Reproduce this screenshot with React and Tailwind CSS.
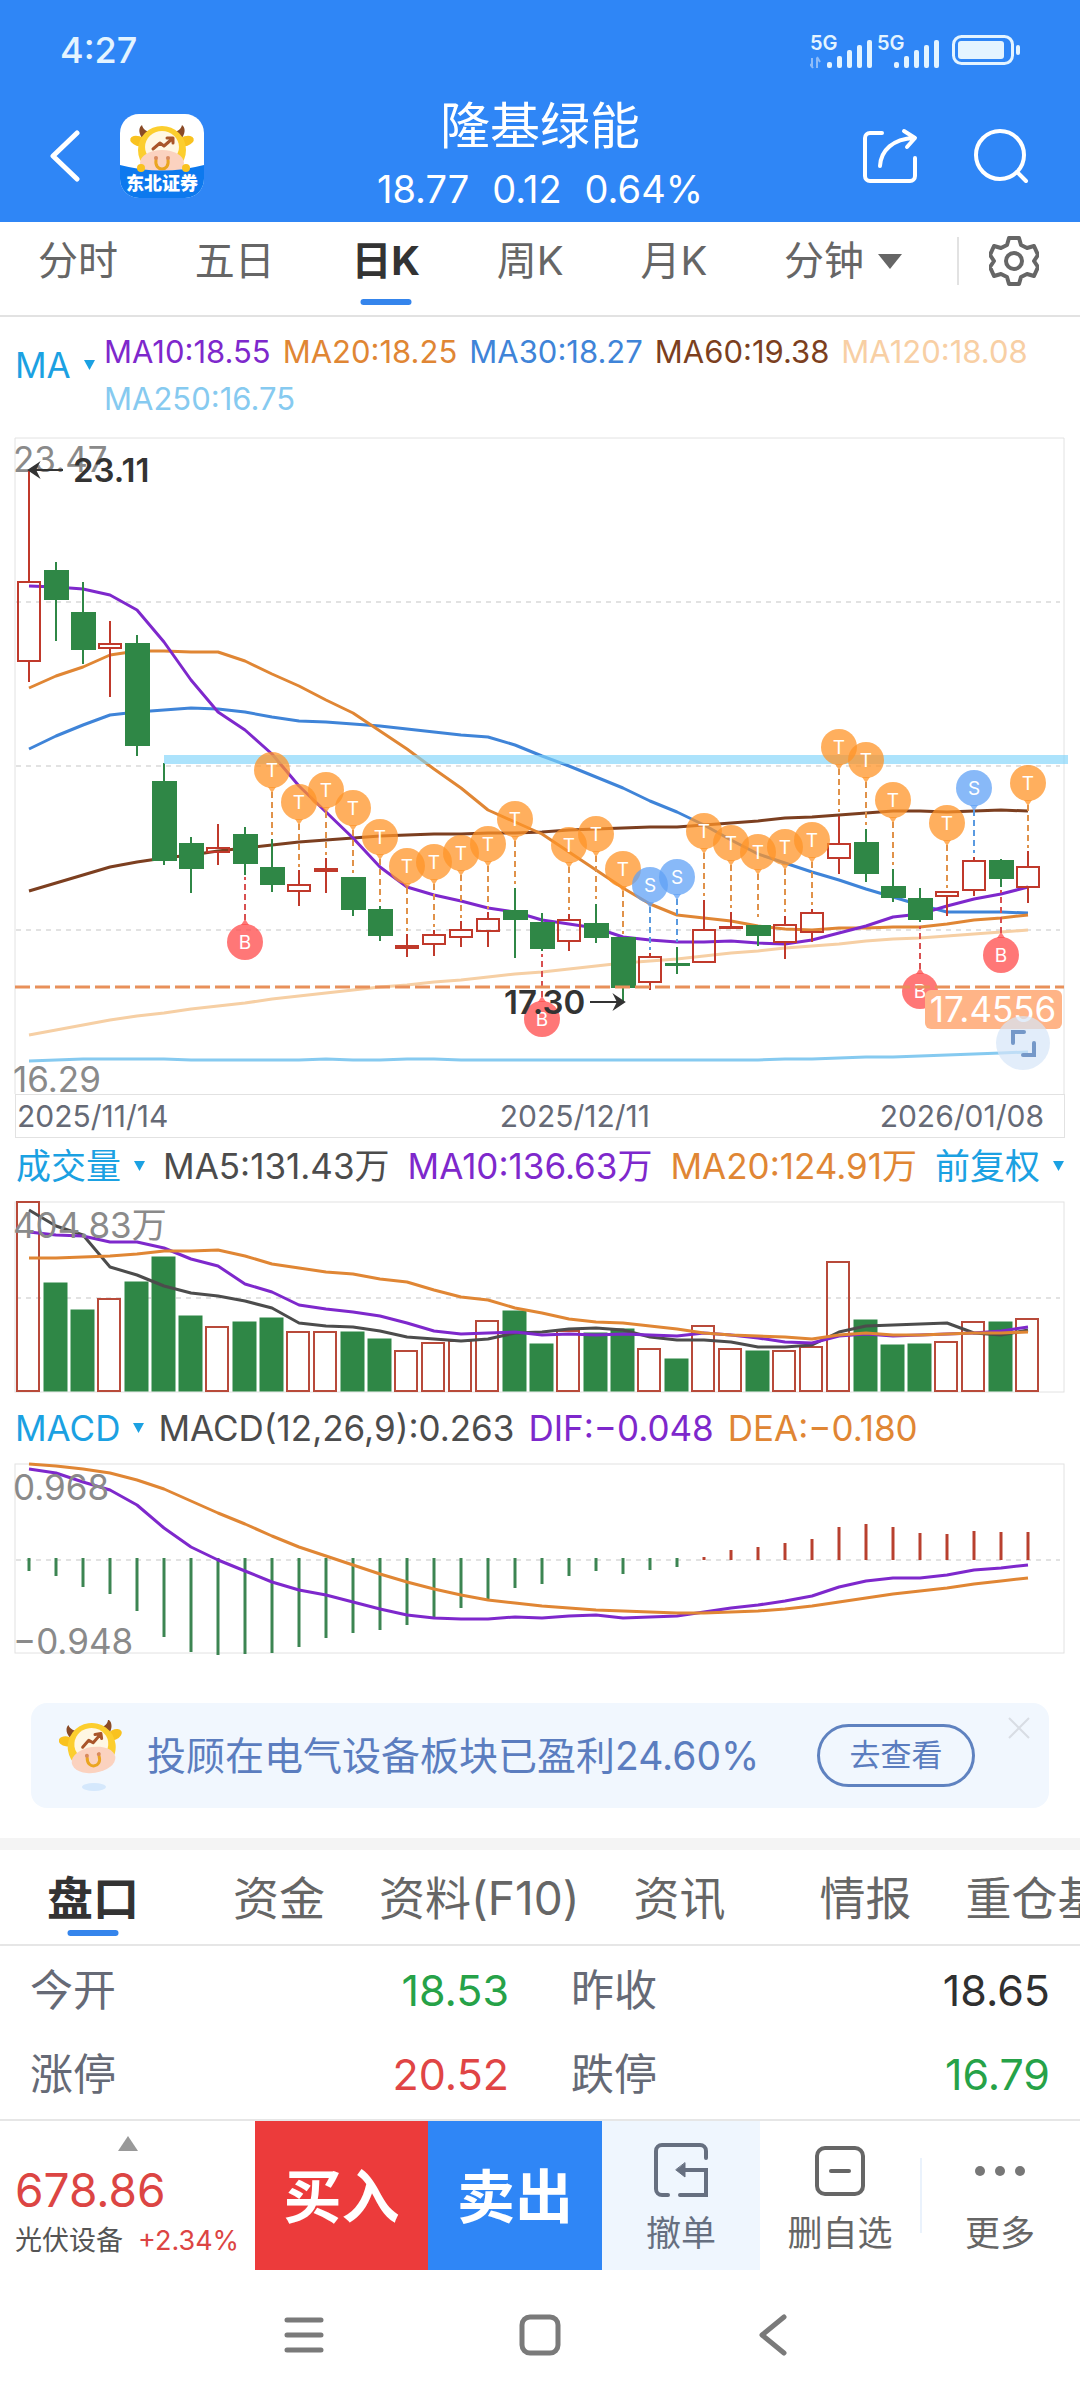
// src/App.jsx
const GREEN = '#2f8746'
const RED = '#c0392b'

const candleX = (i) => 29 + i * 27

// [direction, high, body top, body bottom, low]
const candles = [
  ['up', 470, 582, 661, 682], ['down', 562, 571, 599, 641], ['down', 582, 613, 649, 664], ['up', 621, 644, 648, 697],
  ['down', 635, 644, 745, 756], ['down', 763, 782, 860, 865], ['down', 837, 844, 868, 893], ['up', 824, 848, 852, 865],
  ['down', 827, 835, 863, 875], ['down', 839, 868, 884, 892], ['up', 870, 885, 891, 906], ['up', 858, 869, 871, 893],
  ['down', 877, 878, 909, 916], ['down', 906, 910, 935, 941], ['up', 934, 946, 948, 957], ['up', 930, 935, 944, 956],
  ['up', 921, 930, 937, 947], ['up', 912, 919, 931, 947], ['down', 888, 911, 919, 958], ['down', 913, 923, 948, 951],
  ['up', 914, 920, 941, 951], ['down', 904, 924, 937, 943], ['down', 938, 938, 987, 1001], ['up', 953, 957, 982, 990],
  ['down', 947, 964, 965, 974], ['up', 900, 930, 962, 962], ['up', 912, 927, 928, 928], ['down', 925, 926, 935, 946],
  ['up', 916, 925, 942, 959], ['up', 909, 913, 932, 942], ['up', 816, 844, 858, 874], ['down', 829, 843, 873, 882],
  ['down', 869, 887, 897, 902], ['down', 888, 899, 919, 922], ['up', 892, 892, 896, 916], ['up', 857, 861, 890, 896],
  ['down', 859, 861, 878, 887], ['up', 851, 867, 887, 903],
]

const priceLines = [
  { color: '#f6cfa4', y: [1035, 1030, 1025, 1020, 1016, 1013, 1009, 1006, 1003, 999, 996, 993, 990, 987, 985, 982, 980, 977, 974, 972, 969, 966, 963, 961, 959, 956, 953, 951, 948, 946, 944, 941, 939, 938, 936, 934, 932, 930] },
  { color: '#86caf0', y: [1061, 1060, 1059, 1059, 1059, 1059, 1060, 1060, 1060, 1060, 1060, 1059, 1060, 1060, 1059, 1059, 1060, 1060, 1060, 1060, 1060, 1060, 1060, 1060, 1060, 1060, 1060, 1060, 1059, 1059, 1058, 1057, 1057, 1056, 1055, 1054, 1053, 1052] },
  { color: '#7c3f20', y: [891, 883, 875, 867, 862, 858, 855, 851, 848, 845, 842, 840, 838, 836, 835, 834, 834, 833, 833, 832, 830, 829, 828, 827, 827, 825, 823, 821, 818, 817, 815, 813, 811, 811, 812, 811, 810, 811] },
  { color: '#3f84d8', y: [749, 736, 725, 715, 712, 710, 708, 709, 712, 717, 721, 722, 724, 726, 729, 732, 735, 737, 745, 756, 766, 777, 788, 801, 812, 825, 840, 854, 863, 872, 880, 889, 897, 905, 912, 912, 912, 913] },
  { color: '#e08634', y: [688, 676, 667, 655, 651, 651, 652, 652, 661, 674, 686, 700, 713, 731, 749, 769, 788, 810, 822, 834, 852, 870, 888, 904, 915, 918, 921, 926, 929, 930, 928, 928, 927, 927, 924, 920, 918, 915] },
  { color: '#7e28cc', y: [586, 587, 589, 595, 610, 642, 680, 712, 730, 754, 786, 812, 838, 867, 887, 895, 901, 908, 912, 920, 924, 928, 937, 940, 942, 942, 941, 943, 944, 940, 933, 926, 917, 914, 906, 899, 894, 887] },
]

// [candle index, letter, y of the bubble's centre]
const markers = [
  [9, 'T', 770], [10, 'T', 802], [11, 'T', 790], [12, 'T', 808], [13, 'T', 837], [14, 'T', 866], [15, 'T', 862],
  [16, 'T', 853], [17, 'T', 844], [18, 'T', 819], [20, 'T', 845], [21, 'T', 834], [22, 'T', 869], [23, 'S', 885],
  [24, 'S', 877], [25, 'T', 831], [26, 'T', 843], [27, 'T', 852], [28, 'T', 847], [29, 'T', 840], [30, 'T', 747],
  [31, 'T', 760], [32, 'T', 800], [34, 'T', 823], [35, 'S', 788], [37, 'T', 783],
  [8, 'B', 942], [19, 'B', 1019], [33, 'B', 991], [36, 'B', 955],
]

const markerStyles = {
  T: { fill: '#ff9428', stem: '#e0924a' },
  S: { fill: '#60a2f6', stem: '#5a9ae0' },
  B: { fill: '#ff4a4a', stem: '#d85050' },
}

const volumes = [
  1202, 1283, 1310, 1299, 1282, 1257, 1316, 1327, 1322, 1318, 1332, 1332, 1332, 1339, 1351, 1343, 1341, 1321, 1311,
  1344, 1331, 1333, 1329, 1349, 1359, 1326, 1349, 1351, 1351, 1347, 1262, 1320, 1345, 1344, 1342, 1322, 1322, 1319,
]

const volumeLines = [
  { color: '#4c4c4c', y: [1210, 1226, 1235, 1267, 1275, 1286, 1293, 1296, 1301, 1308, 1323, 1326, 1327, 1331, 1337, 1339, 1341, 1339, 1333, 1332, 1329, 1328, 1330, 1337, 1340, 1340, 1342, 1347, 1347, 1345, 1332, 1326, 1325, 1324, 1323, 1333, 1335, 1330] },
  { color: '#7e28cc', y: [1232, 1235, 1236, 1242, 1242, 1248, 1259, 1266, 1284, 1292, 1305, 1309, 1312, 1316, 1323, 1331, 1334, 1333, 1332, 1335, 1334, 1335, 1334, 1335, 1336, 1333, 1335, 1338, 1342, 1343, 1336, 1334, 1336, 1335, 1334, 1333, 1331, 1327] },
  { color: '#e08634', y: [1258, 1258, 1257, 1256, 1254, 1251, 1251, 1250, 1256, 1264, 1268, 1272, 1274, 1279, 1282, 1290, 1297, 1300, 1308, 1313, 1319, 1322, 1323, 1326, 1329, 1333, 1335, 1336, 1337, 1339, 1335, 1333, 1335, 1335, 1334, 1333, 1333, 1332] },
]

// free ends of the histogram bars, the first 25 hang below zero
const macdBars = [
  1571, 1576, 1587, 1594, 1611, 1637, 1652, 1655, 1654, 1653, 1647, 1638, 1633, 1630, 1625, 1619, 1608, 1599, 1588,
  1584, 1576, 1571, 1574, 1570, 1567, 1557, 1550, 1547, 1543, 1539, 1527, 1524, 1527, 1533, 1534, 1531, 1532, 1532,
]

const macdLines = [
  { color: '#7e28cc', y: [1469, 1473, 1482, 1490, 1505, 1528, 1547, 1560, 1571, 1582, 1590, 1595, 1602, 1609, 1615, 1618, 1619, 1619, 1617, 1618, 1616, 1615, 1618, 1617, 1616, 1612, 1608, 1605, 1601, 1596, 1587, 1581, 1578, 1578, 1575, 1570, 1568, 1565] },
  { color: '#e08634', y: [1464, 1466, 1469, 1473, 1480, 1489, 1501, 1513, 1524, 1536, 1547, 1556, 1565, 1574, 1582, 1589, 1595, 1600, 1603, 1606, 1608, 1610, 1611, 1612, 1613, 1613, 1612, 1611, 1609, 1606, 1602, 1598, 1594, 1591, 1588, 1584, 1581, 1578] },
]

const periods = ['分时', '五日', '日K', '周K', '月K']

const infoTabs = ['盘口', '资金', '资料(F10)', '资讯', '情报', '重仓基金']

const quotes = [
  { label: '今开', value: '18.53', color: 'text-[#26a248]' },
  { label: '昨收', value: '18.65', color: 'text-[#303030]' },
  { label: '涨停', value: '20.52', color: 'text-[#e04545]' },
  { label: '跌停', value: '16.79', color: 'text-[#26a248]' },
]

function Lines({ lines }) {
  return lines.map((line) => (
    <polyline
      key={line.color}
      points={line.y.map((y, i) => `${candleX(i)},${y}`).join(' ')}
      fill="none"
      stroke={line.color}
      strokeWidth={3}
      strokeLinejoin="round"
    />
  ))
}

function GridLine({ y }) {
  return <line x1={16} x2={1060} y1={y} y2={y} stroke="#e2e2e2" strokeWidth={2} strokeDasharray="5 5" />
}

function Triangle({ className }) {
  return (
    <svg className={className} viewBox="0 0 12 11" fill="currentColor" preserveAspectRatio="none" aria-hidden="true">
      <path d="M0 0h12L6 11z" />
    </svg>
  )
}

function Signal({ arrows }) {
  return (
    <svg className="h-[40px] w-[64px]" viewBox="0 -4 64 40" fill="#e4f4ff" aria-hidden="true">
      <text x={0} y={16} className="text-[20px] font-semibold">5G</text>
      {arrows && <path d="M2 32V24M0 30l3 4M7 34V24M10 28l-3-5" stroke="#8fbcf8" strokeWidth={2} fill="none" />}
      {[6, 12, 18, 23, 28].map((h, i) => (
        <rect key={h} x={17 + i * 10} y={34 - h} width={5} height={h} rx={2} />
      ))}
    </svg>
  )
}

function CowFace() {
  return (
    <>
      <path d="M26 22C22 16 23 11 26 9c1 5 6 7 10 8zM66 22c4-6 3-11 0-13-1 5-6 7-10 8z" fill="#8a4a26" />
      <ellipse cx={22} cy={25} rx={8} ry={5} transform="rotate(18 22 25)" fill="#f9c21f" />
      <ellipse cx={70} cy={25} rx={8} ry={5} transform="rotate(-18 70 25)" fill="#f9c21f" />
      <ellipse cx={46} cy={34} rx={24} ry={24} fill="#fcce2e" />
      <ellipse cx={46} cy={31} rx={17} ry={16} fill="#fff7e4" />
      <ellipse cx={46} cy={47} rx={22} ry={13} fill="#fbd2bf" />
      <path d="M37 33l7-6 4 3 8-7M51 22l6 0v5" stroke="#a9552a" strokeWidth={3} fill="none" strokeLinecap="round" strokeLinejoin="round" />
      <path d="M40 44c-2 12 14 12 12 0" stroke="#eaa520" strokeWidth={3} fill="none" strokeLinecap="round" />
      <circle cx={40} cy={42} r={2} fill="#d98a5e" />
      <circle cx={52} cy={42} r={2} fill="#d98a5e" />
    </>
  )
}

function BrokerLogo() {
  return (
    <svg className="size-[84px]" viewBox="0 0 84 84" role="img" aria-label="东北证券">
      <defs>
        <clipPath id="logo-clip"><rect width={84} height={84} rx={19} /></clipPath>
      </defs>
      <g clipPath="url(#logo-clip)">
        <rect width={84} height={84} fill="#fff" />
        <g transform="translate(-4 2)"><CowFace /></g>
        <path d="M0 51q42 11 84 0v33H0z" fill="#0d79ee" />
        <circle cx={21} cy={54} r={4} fill="#f9c21f" />
        <circle cx={66} cy={54} r={4} fill="#f9c21f" />
        <text x={42} y={76} textAnchor="middle" fill="#fff" className="text-[18px] font-black">东北证券</text>
      </g>
    </svg>
  )
}

function Header() {
  return (
    <header className="bg-[#2f86f6] text-white">
      <div className="flex h-[90px] items-center justify-between px-[60px] pt-[10px] text-[#e4f4ff]">
        <span className="text-[36px] font-medium">4:27</span>
        <div className="flex items-center gap-[3px]">
          <Signal arrows />
          <Signal />
          <svg className="ml-[6px] h-[32px] w-[70px]" viewBox="0 0 70 32" fill="none" aria-hidden="true">
            <rect x={3.5} y={2.5} width={59} height={27} rx={8} stroke="#e4f4ff" strokeWidth={3} />
            <rect x={8} y={7} width={46} height={18} rx={3} fill="#e4f4ff" />
            <rect x={66} y={11} width={4} height={10} rx={2} fill="#e4f4ff" />
          </svg>
        </div>
      </div>
      <div className="grid h-[132px] grid-cols-[1fr_auto_1fr] items-center px-[50px]">
        <div className="flex items-center gap-[36px]">
          <button type="button" aria-label="返回">
            <svg className="h-[54px] w-[34px]" viewBox="2 0 34 54" fill="none" stroke="#fff" strokeWidth={5} strokeLinecap="round" strokeLinejoin="round">
              <path d="M29 4L5 27l24 23" />
            </svg>
          </button>
          <BrokerLogo />
        </div>
        <div className="pt-[4px] text-center">
          <h1 className="text-[50px] leading-[63px]">隆基绿能</h1>
          <p className="flex justify-center gap-[23px] text-[38px] leading-[63px]">
            <span>18.77</span>
            <span>0.12</span>
            <span>0.64%</span>
          </p>
        </div>
        <div className="flex items-center justify-end gap-[55px]">
          <button type="button" aria-label="分享">
            <svg className="size-[56px]" viewBox="3 0 56 56" fill="none" stroke="#fff" strokeWidth={4} strokeLinecap="round" strokeLinejoin="round">
              <path d="M22 5H10a5 5 0 00-5 5v38a5 5 0 005 5h40a5 5 0 005-5V30" />
              <path d="M20 38C21 22 33 11 54 10M44 3l11 7-8 9" />
            </svg>
          </button>
          <button type="button" aria-label="搜索">
            <svg className="size-[56px]" viewBox="3 0 56 56" fill="none" stroke="#fff" strokeWidth={4} strokeLinecap="round">
              <circle cx={29} cy={27} r={24} />
              <path d="M46 44l9 9" />
            </svg>
          </button>
        </div>
      </div>
    </header>
  )
}

function PeriodTabs() {
  return (
    <nav className="flex h-[95px] items-center border-b-2 border-[#e2e2e2] pr-[41px] pb-[15px] pl-[38px] text-[40px] text-[#666]">
      <div className="flex flex-1 items-center justify-between">
        {periods.map((name) =>
          name === '日K' ? (
            <button key={name} type="button" className="relative font-bold text-[#333]">
              {name}
              <span className="absolute bottom-[-14px] left-1/2 h-[6px] w-[51px] -translate-x-1/2 rounded-full bg-[#3585ec]" />
            </button>
          ) : (
            <button key={name} type="button">{name}</button>
          )
        )}
        <button type="button" className="flex items-center gap-[14px]">
          分钟
          <Triangle className="h-[15px] w-[24px]" />
        </button>
      </div>
      <div className="mr-[30px] ml-[55px] h-[48px] w-[2px] bg-[#e2e2e2]" />
      <button type="button" aria-label="设置">
        <svg className="size-[50px]" viewBox="0 0 50 50" fill="none" stroke="#666" strokeWidth={4} strokeLinejoin="round">
          <path d="M20 2h10l2 7 6 3 7-2 4 9-4 6 4 6-4 9-7-2-6 3-2 7H20l-2-7-6-3-7 2-4-9 4-6-4-6 4-9 7 2 6-3z" />
          <circle cx={25} cy={25} r={8} />
        </svg>
      </button>
    </nav>
  )
}

function PriceChart() {
  return (
    <section>
      <div className="flex items-start pt-[11px] pr-[16px] pb-[15px] text-[31px]">
        <button type="button" className="flex h-[74px] w-[104px] shrink-0 items-center gap-[13px] pl-[15px] text-[35px] text-[#1ba1e2]">
          MA
          <Triangle className="h-[10px] w-[11px]" />
        </button>
        <div className="flex flex-wrap gap-x-[12px] leading-[47px]">
          <span className="text-[#7e28cc]">MA10:18.55</span>
          <span className="text-[#e08634]">MA20:18.25</span>
          <span className="text-[#3f84d8]">MA30:18.27</span>
          <span className="text-[#7c3f20]">MA60:19.38</span>
          <span className="text-[#f8cfa4]">MA120:18.08</span>
          <span className="text-[#86caf0]">MA250:16.75</span>
        </div>
      </div>
      <svg className="block h-auto w-full overflow-visible" viewBox="0 437 1080 657" role="img" aria-label="日K线图">
        <path d="M15 1094V438H1064V1094" fill="none" stroke="#e2e2e2" strokeWidth={1} />
        <GridLine y={602} />
        <GridLine y={766} />
        <GridLine y={930} />
        <text x={13} y={472} fill="#8a8a8a" className="text-[35px]">23.47</text>
        <text x={13} y={1092} fill="#8a8a8a" className="text-[35px]">16.29</text>

        <Lines lines={priceLines} />

        {candles.map(([dir, high, top, bottom, low], i) => {
          const x = candleX(i)
          const color = dir === 'up' ? RED : GREEN
          return (
            <g key={i} stroke={color} strokeWidth={2}>
              <path d={`M${x} ${high}V${top}M${x} ${bottom}V${low}`} />
              <rect x={x - 11} y={top} width={dir === 'up' ? 22 : 23} height={bottom - top} fill={dir === 'up' ? 'none' : GREEN} />
            </g>
          )
        })}

        {/* Highest and lowest price */}
        <g stroke="#333" strokeWidth={2}>
          <path d="M32 470H63" />
          <path d="M38 464l-9 6 9 6-3-6z" fill="#333" />
          <path d="M590 1002h31" />
          <path d="M615 996l9 6-9 6 3-6z" fill="#333" />
        </g>
        <text x={73} y={482} fill="#333" className="text-[33px] font-semibold">23.11</text>

        <rect x={164} y={755} width={904} height={9} fill="#7fd4fa" opacity={0.65} />

        {markers.map(([index, letter, y]) => {
          const x = candleX(index)
          const { fill, stem } = markerStyles[letter]
          const side = letter === 'B' ? -1 : 1
          return (
            <g key={index}>
              <line x1={x} x2={x} y1={y + side * 22} y2={y + side * 65} stroke={stem} strokeWidth={2} strokeDasharray="6 4" />
              <path d={`M${x - 4} ${y + side * 17}h8l-4 ${side * 6}z`} fill={fill} opacity={0.75} />
              <circle cx={x} cy={y} r={18} fill={fill} opacity={0.75} />
              <text x={x} y={y + 7} textAnchor="middle" fill="#fff" className="text-[19px]">{letter}</text>
            </g>
          )
        })}

        <line x1={15} x2={1064} y1={987} y2={987} stroke="#e8905a" strokeWidth={3} strokeDasharray="15 5" />
        <text x={504} y={1014} fill="#333" className="text-[33px] font-semibold">17.30</text>
        <rect x={925} y={990} width={137} height={39} rx={6} fill="#ffb487" />
        <text x={993} y={1022} textAnchor="middle" fill="#fff" className="text-[35px]">17.4556</text>

        {/* Full screen toggle */}
        <circle cx={1023} cy={1043} r={27} fill="#d5e6f8" opacity={0.7} />
        <path d="M1013 1043v-11h11M1034 1043v12h-11" fill="none" stroke="#7598c8" strokeWidth={4} strokeLinecap="round" />
      </svg>
      <div className="mx-[15px] grid h-[44px] grid-cols-[47%_1fr_auto] items-center border border-[#e2e2e2] pr-[20px] pl-px text-[30px] leading-[40px] text-[#666a76]">
        <span>2025/11/14</span>
        <span>2025/12/11</span>
        <span>2026/01/08</span>
      </div>
    </section>
  )
}

function VolumeChart() {
  return (
    <section>
      <div className="flex h-[62px] items-center justify-between pr-[16px] pb-[6px] pl-[16px] text-[35px]">
        <button type="button" className="flex items-center gap-[13px] text-[#1ba1e2]">
          成交量
          <Triangle className="h-[10px] w-[11px]" />
        </button>
        <span className="text-[#4c4c4c]">MA5:131.43万</span>
        <span className="text-[#7e28cc]">MA10:136.63万</span>
        <span className="text-[#e08634]">MA20:124.91万</span>
        <button type="button" className="flex items-center gap-[13px] text-[#1ba1e2]">
          前复权
          <Triangle className="h-[10px] w-[11px]" />
        </button>
      </div>
      <svg className="block h-auto w-full overflow-visible" viewBox="0 1200 1080 194" role="img" aria-label="成交量图">
        <rect x={15} y={1202} width={1049} height={190} fill="none" stroke="#e2e2e2" strokeWidth={1} />
        <GridLine y={1298} />
        {volumes.map((top, i) => {
          const up = candles[i][0] === 'up'
          return (
            <rect
              key={i}
              x={candleX(i) - 12}
              y={top}
              width={up ? 22 : 23}
              height={1391 - top}
              fill={up ? 'none' : GREEN}
              stroke={up ? '#b84a3a' : GREEN}
              strokeWidth={up ? 2 : 1}
            />
          )
        })}
        <Lines lines={volumeLines} />
        <text x={13} y={1238} fill="#8a8a8a" className="text-[35px]">404.83万</text>
      </svg>
    </section>
  )
}

function MacdChart() {
  return (
    <section>
      <div className="flex h-[68px] items-center gap-[14px] pl-[15px] text-[35px]">
        <button type="button" className="flex items-center gap-[13px] text-[#1ba1e2]">
          MACD
          <Triangle className="h-[10px] w-[11px]" />
        </button>
        <span className="text-[#4c4c4c]">MACD(12,26,9):0.263</span>
        <span className="text-[#7e28cc]">DIF:−0.048</span>
        <span className="text-[#e08634]">DEA:−0.180</span>
      </div>
      <svg className="block h-auto w-full overflow-visible" viewBox="0 1462 1080 194" role="img" aria-label="MACD图">
        <rect x={15} y={1464} width={1049} height={189} fill="none" stroke="#e2e2e2" strokeWidth={1} />
        <GridLine y={1560} />
        {macdBars.map((end, i) => (
          <line
            key={i}
            x1={candleX(i)}
            x2={candleX(i)}
            y1={i < 25 ? 1558 : 1560}
            y2={end}
            stroke={i < 25 ? '#3c8552' : '#b8402f'}
            strokeWidth={3}
          />
        ))}
        <Lines lines={macdLines} />
        <text x={13} y={1500} fill="#8a8a8a" className="text-[35px]">0.968</text>
        <text x={13} y={1654} fill="#8a8a8a" className="text-[35px]">−0.948</text>
      </svg>
    </section>
  )
}

function AdvisorBanner() {
  return (
    <div className="relative mx-[31px] mt-[47px] mb-[30px] flex h-[105px] items-center rounded-[16px] bg-[#f1f7fe] pr-[74px] pl-[28px] text-[#5b7dbf]">
      <svg className="mr-[24px] h-[72px] w-[64px]" viewBox="13 7 64 72" aria-hidden="true">
        <ellipse cx={48} cy={74} rx={12} ry={4} fill="#d5e8fc" />
        <g transform="rotate(-8 46 36)"><CowFace /></g>
      </svg>
      <p className="flex-1 pt-[2px] text-[39px] whitespace-nowrap">投顾在电气设备板块已盈利24.60%</p>
      <button type="button" className="h-[63px] w-[158px] rounded-full border-[3px] border-[#5f82c0] text-[31px]">
        去查看
      </button>
      <button type="button" aria-label="关闭" className="absolute top-[14px] right-[19px]">
        <svg className="size-[22px]" viewBox="0 0 22 22" stroke="#d8dde4" strokeWidth={2}>
          <path d="M1 1l20 20M21 1L1 21" />
        </svg>
      </button>
    </div>
  )
}

function QuotePanel() {
  return (
    <section className="border-t-[12px] border-[#f4f4f4]">
      <nav className="flex h-[96px] overflow-hidden border-b-2 border-[#e6e6e6] text-[46px] whitespace-nowrap text-[#666]">
        {infoTabs.map((name) =>
          name === '盘口' ? (
            <button key={name} type="button" className="relative w-[186px] shrink-0 pt-[3px] font-bold text-[#333]">
              {name}
              <span className="absolute bottom-[8px] left-1/2 h-[6px] w-[51px] -translate-x-1/2 rounded-full bg-[#3585ec]" />
            </button>
          ) : (
            <button key={name} type="button" className="min-w-[186px] shrink-0 px-[7px] pt-[3px]">{name}</button>
          )
        )}
      </nav>
      <dl className="grid grid-cols-2 gap-x-[62px] px-[30px] pt-[2px] pb-[3px]">
        {quotes.map((q) => (
          <div key={q.label} className="flex h-[84px] items-center justify-between text-[43px]">
            <dt className="text-[#666a76]">{q.label}</dt>
            <dd className={q.color}>{q.value}</dd>
          </div>
        ))}
      </dl>
    </section>
  )
}

function TradeBar() {
  return (
    <footer className="grid h-[151px] grid-cols-[255fr_173fr_174fr_158fr_160fr_160fr] border-t-2 border-[#e6e6e6]">
      <div className="flex flex-col pt-[15px] pl-[15px] text-[#dc4543]">
        <Triangle className="ml-[103px] h-[15px] w-[20px] rotate-180 text-[#999]" />
        <p className="pt-[7px] text-[46px] leading-[64px]">678.86</p>
        <p className="flex gap-[15px] text-[27px] leading-[38px] whitespace-nowrap">
          <span className="text-[#555]">光伏设备</span>
          <span>+2.34%</span>
        </p>
      </div>
      <button type="button" className="bg-[#ec3b3b] pt-[4px] text-[58px] font-bold text-white">买入</button>
      <button type="button" className="bg-[#2f86f6] pt-[4px] text-[58px] font-bold text-white">卖出</button>
      <button type="button" className="flex flex-col items-center bg-[#eff6fe] pt-[22px] text-[35px] leading-[50px] text-[#666f80]">
        <svg className="mb-[11px] size-[54px]" viewBox="0 0 54 54" fill="none" stroke="#666f80" strokeWidth={4} strokeLinecap="round">
          <path d="M52 15V8a6 6 0 00-6-6H8a6 6 0 00-6 6v38a6 6 0 006 6h6M26 52h26V27H28" />
          <path d="M31 20v14l-9-7z" fill="#666f80" strokeWidth={1} />
        </svg>
        撤单
      </button>
      <button type="button" className="flex flex-col items-center pt-[22px] text-[35px] leading-[50px] text-[#666]">
        <svg className="mb-[11px] size-[54px]" viewBox="0 0 54 54" fill="none" stroke="#666" strokeWidth={4} strokeLinecap="round">
          <rect x={4} y={5} width={46} height={46} rx={8} />
          <path d="M18 28h18" />
        </svg>
        删自选
      </button>
      <button type="button" className="relative flex flex-col items-center pt-[22px] text-[35px] leading-[50px] text-[#666]">
        <span className="absolute top-[37px] left-0 h-[75px] w-[2px] bg-[#eaf2fc]" />
        <svg className="mb-[11px] size-[54px]" viewBox="0 0 54 54" fill="#777" aria-hidden="true">
          <circle cx={7} cy={28} r={5} />
          <circle cx={27} cy={28} r={5} />
          <circle cx={47} cy={28} r={5} />
        </svg>
        更多
      </button>
    </footer>
  )
}

function SystemNav() {
  return (
    <nav className="flex h-[130px] items-center justify-center gap-[193px] text-[#7a7a7a]">
      <button type="button" aria-label="最近任务">
        <svg className="size-[42px]" viewBox="1 -1 42 42" stroke="currentColor" strokeWidth={5} strokeLinecap="round">
          <path d="M4 5h34M4 20h34M4 35h34" />
        </svg>
      </button>
      <button type="button" aria-label="主屏幕">
        <svg className="size-[42px]" viewBox="1 -1 42 42" fill="none" stroke="currentColor" strokeWidth={5}>
          <rect x={4} y={2} width={36} height={36} rx={8} />
        </svg>
      </button>
      <button type="button" aria-label="返回上一页">
        <svg className="size-[42px]" viewBox="0 -1 42 42" fill="none" stroke="currentColor" strokeWidth={5} strokeLinecap="round" strokeLinejoin="round">
          <path d="M30 2L8 20l22 18" />
        </svg>
      </button>
    </nav>
  )
}

export default function App() {
  return (
    <div className="overflow-hidden bg-white font-[Inter,'Noto_Sans_CJK_SC',sans-serif]">
      <Header />
      <PeriodTabs />
      <PriceChart />
      <VolumeChart />
      <MacdChart />
      <AdvisorBanner />
      <QuotePanel />
      <TradeBar />
      <SystemNav />
    </div>
  )
}
